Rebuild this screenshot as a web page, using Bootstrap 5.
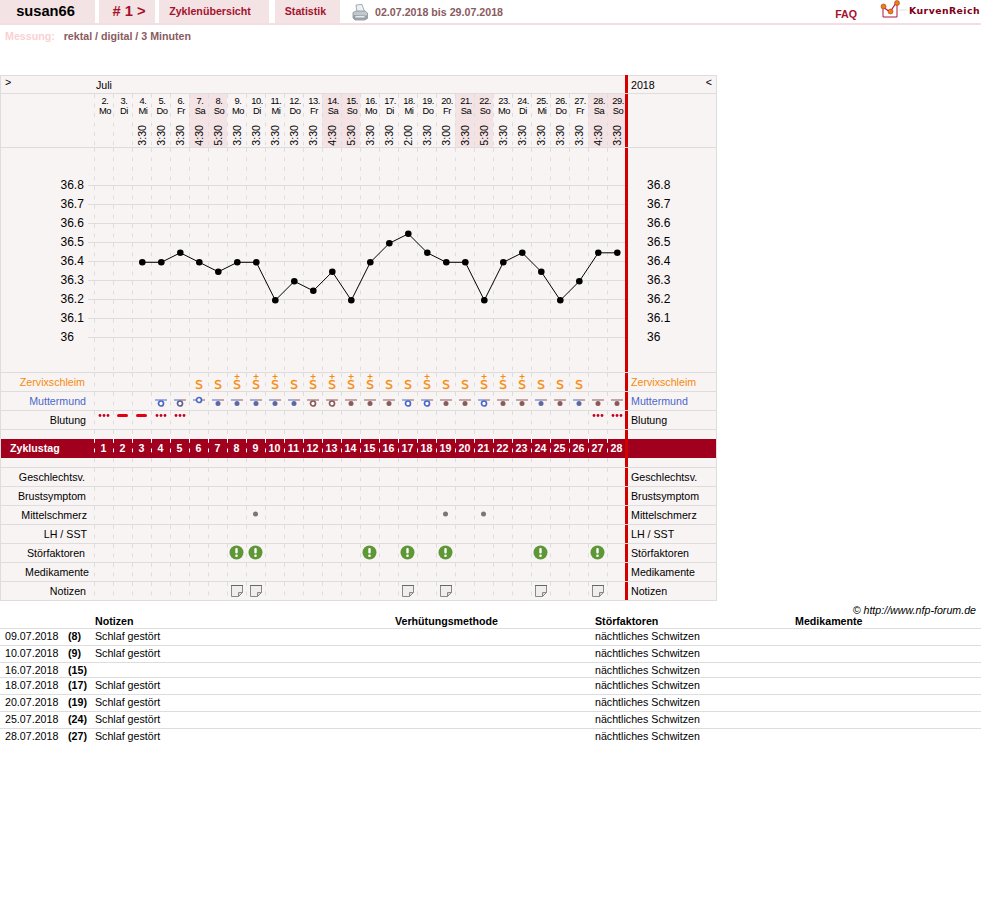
<!DOCTYPE html>
<html lang="de">
<head>
<meta charset="utf-8">
<title>susan66 - Zyklus 1</title>
<link rel="stylesheet" href="https://cdn.jsdelivr.net/npm/bootstrap@5.3.0/dist/css/bootstrap.min.css">
<style>
body{background:#fff;color:#000;font-family:"Liberation Sans",Arial,sans-serif;font-size:10.67px;line-height:13px}
.kopf{height:25px;border-bottom:2px solid #f3dfe2}
.reiter{background:#f3e3e4;height:23px;display:flex;align-items:center;justify-content:center;font-weight:700;color:#a5122c}
.r-name{width:95px;margin-right:4px;font-size:14.67px;color:#000;padding-right:4px}
.r-nr{width:56px;margin-right:4px;font-size:14.67px;padding-left:4px}
.r-zyk{width:110px;margin-right:6px;padding-right:8px}
.r-stat{width:65px;margin-right:12px;padding-right:4px}
.zeitraum{color:#8a5a60;font-weight:700;margin-left:7px;margin-top:6px}
.faq{color:#a5122c;font-weight:700;margin-right:23px;margin-top:8px}
.logo-bild{margin-right:1px}
.marke{color:#7d0016;font-family:"DejaVu Sans",sans-serif;font-weight:700;font-size:9.3px;margin-right:1px;letter-spacing:.45px}
.messung{height:50px;padding:5px 0 0 5px;font-weight:700;color:#8a5a60}
.messung b{color:#fbd0d3;margin-right:6px}
.kurve{width:717px;background:#f9f4f4;border:1px solid #ddd;border-bottom:0}
.zeile{display:flex;border-bottom:1px solid #ddd;height:19px}
.zeile.monat{height:18px}
.zeile.datum{height:54px}
.zeile.plot{height:225px;position:relative}
.zeile.frei{height:9px;border-bottom:0}
.zeile.frei2{height:10px}
.zeile.band{border-bottom:0;background:#a0001e;color:#fff;font-weight:700}
.etikett{width:93px;flex:none;text-align:right;padding-right:8px;line-height:18px;white-space:nowrap}
.etikett.mehr{padding-right:5px}
.etikett.mehr1{padding-right:7px}
.etikett.mehr2{padding-right:9px}
.band .etikett{text-align:left;padding-left:9px}
.monat .etikett{text-align:left;padding-left:4px;position:relative;top:-3px}
.tag{width:19px;flex:none;position:relative;text-align:center;line-height:18px;background-image:linear-gradient(#ddd 4px,transparent 4px);background-size:1px 9.5px;background-repeat:repeat-y}
.band .tag{background-image:linear-gradient(#fff 4px,transparent 4px)}
.monat-mitte{width:532px;flex:none;padding-left:1px;line-height:18px;padding-left:2px}
.seite{flex:none;width:91px;margin-left:-1px;border-left:3px solid #d40000;padding-left:3px;line-height:18px;position:relative;z-index:1;white-space:nowrap}
.monat .seite{margin-top:-1px;padding-top:1px}
.band .seite{background:#a0001e}
.ecke{position:absolute;right:4px;top:0;line-height:14px}
.wochenende{background-color:#f3e3e4}
.datum .tag{display:flex;flex-direction:column;align-items:center;line-height:9.5px;font-size:9.33px;padding:3px 0 0 3px;letter-spacing:-.45px}
.uhr{writing-mode:vertical-rl;transform:rotate(180deg);font-size:10.67px;line-height:13px;letter-spacing:0;margin:auto 0 1px -2px}
.plotbild{position:absolute;left:0;top:0}
.plotbild text{font-family:"Liberation Sans",Arial,sans-serif;font-size:12px;fill:#000}
.orange{color:#f58a0c}
.blau{color:#4a68c9}
.schleim{color:#f58a0c;font-family:"DejaVu Sans",sans-serif;-webkit-text-stroke:.3px #f58a0c;display:flex;flex-direction:column;align-items:center;height:18px;font-size:12px;line-height:10px;padding:1px 0 0 1px}
.schleim .sp{height:5px;margin:0 0 1px 0;flex:none;display:block}
.schleim .lz{height:6px;flex:none}
.tag svg{display:block;margin:auto}
.rechte{padding:3px 5px 0 0;text-align:right;font-style:italic;height:14px;width:100%}
.notiztab{table-layout:fixed;width:981px;font-size:10.67px;line-height:13px;--bs-table-bg:transparent}
.notiztab th,.notiztab td{padding:1px 0 2px 0;border-bottom:1px solid #ddd;color:#000;vertical-align:top}
.notiztab th{padding:0;height:13px}
.notiztab tr.knapp td{padding-top:1px;padding-bottom:0}
.notiztab tr:last-child td{border-bottom:0}
.notiztab .d1,.notiztab tr.knapp .d1{width:68px;padding-left:5px}
.notiztab .d2{width:27px;font-weight:700}
.notiztab .d3{width:300px}
.notiztab .d4{width:200px}
.notiztab .d5{width:200px}
</style>
</head>
<body class="m-0">
<header class="kopf d-flex align-items-start">
  <div class="reiter r-name">susan66</div>
  <div class="reiter r-nr">#&nbsp;1&nbsp;&gt;</div>
  <div class="reiter r-zyk">Zyklenübersicht</div>
  <div class="reiter r-stat">Statistik</div>
  <svg width="16" height="18" viewBox="0 0 16 18" class="flex-none mt-1"><path d="M4 1l6-.5 2.500 7H5z" fill="#eef1f4" stroke="#8d99a3" stroke-width=".8"/><path d="M1 8.500l3-1.500h9l2.500 2v5.500l-3 1.500H3L1 14z" fill="#c3c8cc" stroke="#7d858c" stroke-width=".7"/><path d="M1 11l14 .5v3l-3 1.500H3l-2-1.500z" fill="#9aa1a8"/><path d="M3.500 12h9v1.500h-9z" fill="#e8eaec"/></svg>
  <div class="zeitraum">02.07.2018 bis 29.07.2018</div>
  <div class="faq ms-auto">FAQ</div>
  <svg width="28" height="22" viewBox="0 0 28 22" class="flex-none logo-bild"><path d="M19 10h8" stroke="#e3dfe0" stroke-width="1"/><path d="M3 9v8h14V5" fill="none" stroke="#b3123a" stroke-width="1"/><path d="M3 7l7 5 6-9" fill="none" stroke="#b3123a" stroke-width="1.200"/><circle cx="3.500" cy="6.500" r="2.500" fill="#e88408" stroke="#a5122c" stroke-width=".5"/><circle cx="10.500" cy="11.500" r="2.500" fill="#e88408" stroke="#a5122c" stroke-width=".5"/><circle cx="17" cy="3" r="2.500" fill="#e88408" stroke="#a5122c" stroke-width=".5"/></svg>
  <div class="marke mt-1">KurvenReich</div>
</header>
<div class="messung"><b>Messung:</b> rektal / digital / 3 Minuten</div>

<section class="kurve" id="kurve"></section>

<div class="rechte">© http://www.nfp-forum.de</div>
<table class="table table-borderless mb-0 notiztab">
  <thead><tr><th class="d1"></th><th class="d2"></th><th class="d3">Notizen</th><th class="d4">Verhütungsmethode</th><th class="d5">Störfaktoren</th><th>Medikamente</th></tr></thead>
  <tbody>
    <tr><td class="d1">09.07.2018</td><td class="d2">(8)</td><td>Schlaf gestört</td><td></td><td>nächtliches Schwitzen</td><td></td></tr>
    <tr><td class="d1">10.07.2018</td><td class="d2">(9)</td><td>Schlaf gestört</td><td></td><td>nächtliches Schwitzen</td><td></td></tr>
    <tr class="knapp"><td class="d1">16.07.2018</td><td class="d2">(15)</td><td></td><td></td><td>nächtliches Schwitzen</td><td></td></tr>
    <tr><td class="d1">18.07.2018</td><td class="d2">(17)</td><td>Schlaf gestört</td><td></td><td>nächtliches Schwitzen</td><td></td></tr>
    <tr><td class="d1">20.07.2018</td><td class="d2">(19)</td><td>Schlaf gestört</td><td></td><td>nächtliches Schwitzen</td><td></td></tr>
    <tr><td class="d1">25.07.2018</td><td class="d2">(24)</td><td>Schlaf gestört</td><td></td><td>nächtliches Schwitzen</td><td></td></tr>
    <tr><td class="d1">28.07.2018</td><td class="d2">(27)</td><td>Schlaf gestört</td><td></td><td>nächtliches Schwitzen</td><td></td></tr>
  </tbody>
</table>
<script src="https://cdn.jsdelivr.net/npm/bootstrap@5.3.0/dist/js/bootstrap.bundle.min.js"></script>
<script>
const N=28, alle=[...Array(N).keys()].map(i=>i+1);
const WT=['Mo','Di','Mi','Do','Fr','Sa','So'];
const Z={3:'3:30',4:'3:30',5:'3:30',6:'4:30',7:'5:30',8:'3:30',9:'3:30',10:'3:30',11:'3:30',12:'3:30',13:'4:30',14:'5:30',15:'3:30',16:'3:30',17:'2:00',18:'3:30',19:'3:00',20:'3:30',21:'5:30',22:'3:30',23:'3:30',24:'3:30',25:'3:30',26:'3:30',27:'4:30',28:'3:30'};
const T=[36.4,36.4,36.45,36.4,36.35,36.4,36.4,36.2,36.3,36.25,36.35,36.2,36.4,36.5,36.55,36.45,36.4,36.4,36.2,36.4,36.45,36.35,36.2,36.3,36.45,36.45];
const B='#4a68c9',R='#8a5a5a';
function zeile(cls,links,tage,rechts,lcls){
  return `<div class="zeile ${cls||''}"><div class="etikett ${lcls||''}">${links}</div>${alle.map(d=>`<div class="tag">${tage?(tage(d)||''):''}</div>`).join('')}<div class="seite">${rechts}</div></div>`;
}
function mund(l1,l2,farbe,voll,cy){
  cy=cy||11.5;
  const r=voll?`<circle cx="10" cy="${cy}" r="2.500" fill="${farbe}"/>`:`<circle cx="10" cy="${cy}" r="2.500" fill="#fff" stroke="${farbe}" stroke-width="1.700"/>`;
  return `<svg width="19" height="18" viewBox="0 0 19 18"><path d="M4 8h6" stroke="${l1}"/><path d="M10 8h6" stroke="${l2}"/>${r}</svg>`;
}
const MM={4:[B,B,B,0],5:[B,R,'#5f5f95',0],6:[B,R,B,0,8],7:[B,R,'#5a68a8',1],8:[B,R,'#5a68a8',1],9:[B,R,'#5a68a8',1],10:[B,R,'#5a68a8',1],11:[B,R,'#5a68a8',1],12:[R,R,R,0],13:[R,R,R,0],14:[R,R,R,1],15:[R,R,R,1],16:[R,R,R,1],17:[B,R,B,0],18:[B,R,B,0],19:[R,R,R,1],20:[R,R,R,1],21:[B,R,B,0],22:[R,R,R,1],23:[R,R,R,1],24:[B,R,'#5a68a8',1],25:[R,R,R,1],26:[B,R,'#5a68a8',1],27:[R,R,R,1],28:[R,R,R,1]};
const PLUS=[8,9,10,12,13,14,15,18,21,22,23];
const kreuz=`<svg class="sp" width="6" height="5" viewBox="0 0 6 5"><path d="M3 0v5M.5 2.500h5" stroke="#f58a0c"/></svg>`;
const punkte=`<svg width="19" height="18" viewBox="0 0 19 18"><g fill="#c40022"><circle cx="6" cy="4.500" r="1.400"/><circle cx="10" cy="4.500" r="1.400"/><circle cx="14" cy="4.500" r="1.400"/></g></svg>`;
const balken=`<svg width="19" height="18" viewBox="0 0 19 18"><rect x="4" y="3" width="11" height="3" rx="1.500" fill="#e00012"/></svg>`;
const stoer=`<svg width="19" height="18" viewBox="0 0 19 18"><circle cx="9.500" cy="8.500" r="7" fill="#5e9735"/><rect x="8.300" y="4" width="2.400" height="5.500" rx="1.100" fill="#fff"/><circle cx="9.500" cy="11.700" r="1.300" fill="#fff"/></svg>`;
const notiz=`<svg width="19" height="18" viewBox="0 0 19 18"><path d="M4.500 3.500h11v7l-4 4h-7z" fill="#efeeec" stroke="#888"/><path d="M15.500 10.500h-4v4z" fill="#d8d8d8" stroke="#888"/><path d="M4 3.500h12" stroke="#666"/></svg>`;
const grau=`<svg width="19" height="18" viewBox="0 0 19 18"><circle cx="9.500" cy="8" r="2.500" fill="#777"/></svg>`;

const yy=[36.8,36.7,36.6,36.5,36.4,36.3,36.2,36.1,36];
let plot='';
yy.forEach((v,i)=>{const y=37.5+19*i;plot+=`<path d="M87 ${y}H624" stroke="#ddd"/><text x="59.5" y="${y+3}">${v}</text><text x="646" y="${y+3}">${v}</text>`});
const px=T.map((v,i)=>[141.3+19*i,114.3+(36.4-v)*190]);
plot+=`<polyline points="${px.map(p=>p.join(',')).join(' ')}" fill="none" stroke="#000"/>`;
px.forEach(p=>plot+=`<circle cx="${p[0]}" cy="${p[1]}" r="3.300" fill="#000"/>`);

let h='';
h+=`<div class="zeile monat"><div class="etikett">&gt;</div><div class="monat-mitte">Juli</div><div class="seite">2018<span class="ecke">&lt;</span></div></div>`;
h+=`<div class="zeile datum"><div class="etikett"></div>${alle.map(d=>{const w=(d-1)%7;return `<div class="tag ${(w==5||w==6)?'wochenende':''}"><span>${d+1}.</span><span>${WT[w]}</span>${Z[d]?`<span class="uhr">${Z[d]}</span>`:''}</div>`}).join('')}<div class="seite"></div></div>`;
h+=`<div class="zeile plot"><div class="etikett"></div>${alle.map(()=>'<div class="tag"></div>').join('')}<div class="seite"></div><svg class="plotbild" width="715" height="224" viewBox="0 0 715 224">${plot}</svg></div>`;
h+=zeile('','<span class="orange">Zervixschleim</span>',d=>d>=6&&d<=26?`<div class="schleim">${PLUS.includes(d)?kreuz:'<div class="lz"></div>'}<span>S</span></div>`:'','<span class="orange">Zervixschleim</span>','mehr2');
h+=zeile('','<span class="blau">Muttermund</span>',d=>MM[d]?mund(...MM[d]):'','<span class="blau">Muttermund</span>');
h+=zeile('','Blutung',d=>d==2||d==3?balken:(d==1||d==4||d==5||d==27||d==28)?punkte:'','Blutung');
h+=zeile('frei','',null,'');
h+=zeile('band','Zyklustag',d=>d,'');
h+=zeile('frei2','',null,'');
h+=zeile('','Geschlechtsv.',null,'Geschlechtsv.','mehr2');
h+=zeile('','Brustsymptom',null,'Brustsymptom');
h+=zeile('','Mittelschmerz',d=>[9,19,21].includes(d)?grau:'','Mittelschmerz','mehr1');
h+=zeile('','LH / SST',null,'LH / SST','mehr1');
h+=zeile('','Störfaktoren',d=>[8,9,15,17,19,24,27].includes(d)?stoer:'','Störfaktoren','mehr2');
h+=zeile('','Medikamente',null,'Medikamente','mehr');
h+=zeile('','Notizen',d=>[8,9,17,19,24,27].includes(d)?notiz:'','Notizen');
document.getElementById('kurve').innerHTML=h;
</script>
</body>
</html>
